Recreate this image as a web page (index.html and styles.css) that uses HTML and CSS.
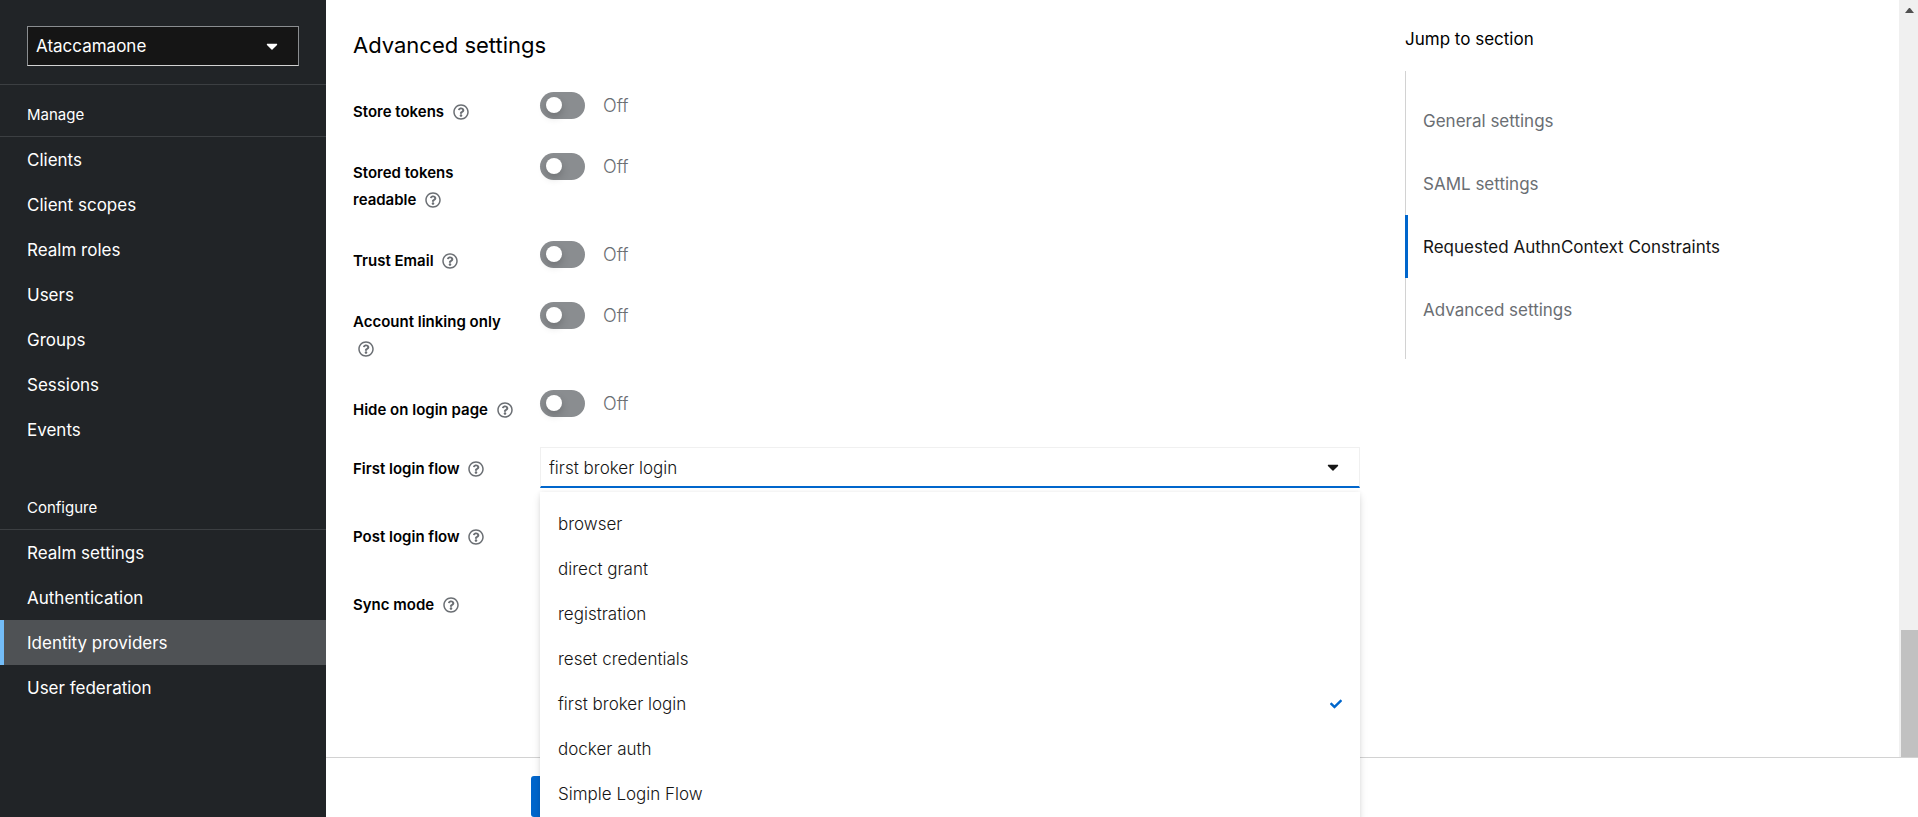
FILE: index.html
```html
<!DOCTYPE html>
<html lang="en">
<head>
<meta charset="utf-8">
<title>Identity providers</title>
<link rel="stylesheet" href="styles.css">
</head>
<body>
<svg class="sprite" aria-hidden="true">
  <symbol id="help" viewBox="0 0 512 512"><path d="M256 8C119.043 8 8 119.083 8 256c0 136.997 111.043 248 248 248s248-111.003 248-248C504 119.083 392.957 8 256 8zm0 448c-110.532 0-200-89.431-200-200 0-110.495 89.472-200 200-200 110.491 0 200 89.471 200 200 0 110.53-89.431 200-200 200zm107.244-255.2c0 67.052-72.421 68.084-72.421 92.863V300c0 6.627-5.373 12-12 12h-45.647c-6.627 0-12-5.373-12-12v-8.659c0-35.745 27.1-50.034 47.579-61.516 17.561-9.845 28.324-16.541 28.324-29.579 0-17.246-21.999-28.693-39.784-28.693-23.189 0-33.894 10.977-48.942 29.969-4.057 5.12-11.46 6.071-16.666 2.124l-27.824-21.098c-5.107-3.872-6.251-11.066-2.644-16.363C184.846 131.491 214.94 112 261.794 112c49.071 0 101.45 38.304 101.45 88.8zM298 368c0 23.159-18.841 42-42 42s-42-18.841-42-42 18.841-42 42-42 42 18.841 42 42z"/></symbol>
  <symbol id="caret" viewBox="0 0 320 512"><path d="M31.3 192h257.3c17.8 0 26.7 21.5 14.1 34.1L174.1 354.8c-7.8 7.8-20.5 7.8-28.3 0L17.2 226.1C4.6 213.5 13.5 192 31.3 192z"/></symbol>
  <symbol id="check" viewBox="0 0 512 512"><path d="M173.898 439.404l-166.4-166.4c-9.997-9.997-9.997-26.206 0-36.204l36.203-36.204c9.997-9.998 26.207-9.998 36.204 0L192 312.69 432.095 72.596c9.997-9.997 26.207-9.997 36.204 0l36.203 36.204c9.997 9.997 9.997 26.206 0 36.204l-294.4 294.401c-9.998 9.997-26.207 9.997-36.204-.001z"/></symbol>
</svg>
<div class="app">
  <nav class="sidebar" aria-label="Global">
    <div class="realm">
      <button class="realm-toggle" type="button">Ataccamaone<svg class="caret"><use href="#caret"/></svg></button>
    </div>
    <section class="nav-group">
      <h2 class="nav-title">Manage</h2>
      <ul class="nav-list">
        <li><a class="nav-link" href="#clients">Clients</a></li>
        <li><a class="nav-link" href="#client-scopes">Client scopes</a></li>
        <li><a class="nav-link" href="#realm-roles">Realm roles</a></li>
        <li><a class="nav-link" href="#users">Users</a></li>
        <li><a class="nav-link" href="#groups">Groups</a></li>
        <li><a class="nav-link" href="#sessions">Sessions</a></li>
        <li><a class="nav-link" href="#events">Events</a></li>
      </ul>
    </section>
    <section class="nav-group">
      <h2 class="nav-title">Configure</h2>
      <ul class="nav-list">
        <li><a class="nav-link" href="#realm-settings">Realm settings</a></li>
        <li><a class="nav-link" href="#authentication">Authentication</a></li>
        <li><a class="nav-link current" href="#identity-providers" aria-current="page">Identity providers</a></li>
        <li><a class="nav-link" href="#user-federation">User federation</a></li>
      </ul>
    </section>
  </nav>
  <main class="main">
    <div class="body">
      <form class="form">
        <h1 class="form-title">Advanced settings</h1>
        <div class="switches">
          <div class="row">
            <div class="label"><label for="store">Store tokens</label> <button class="help" type="button" aria-label="Help for Store tokens"><svg><use href="#help"/></svg></button></div>
            <div class="switch"><input id="store" type="checkbox" role="switch"><span>Off</span></div>
          </div>
          <div class="row">
            <div class="label"><label for="readable">Stored tokens readable</label> <button class="help" type="button" aria-label="Help for Stored tokens readable"><svg><use href="#help"/></svg></button></div>
            <div class="switch"><input id="readable" type="checkbox" role="switch"><span>Off</span></div>
          </div>
          <div class="row">
            <div class="label"><label for="trust">Trust Email</label> <button class="help" type="button" aria-label="Help for Trust Email"><svg><use href="#help"/></svg></button></div>
            <div class="switch"><input id="trust" type="checkbox" role="switch"><span>Off</span></div>
          </div>
          <div class="row">
            <div class="label"><label for="linking">Account linking only</label> <button class="help" type="button" aria-label="Help for Account linking only"><svg><use href="#help"/></svg></button></div>
            <div class="switch"><input id="linking" type="checkbox" role="switch"><span>Off</span></div>
          </div>
          <div class="row">
            <div class="label"><label for="hide">Hide on login page</label> <button class="help" type="button" aria-label="Help for Hide on login page"><svg><use href="#help"/></svg></button></div>
            <div class="switch"><input id="hide" type="checkbox" role="switch"><span>Off</span></div>
          </div>
        </div>
        <div class="selects">
          <div class="row">
            <div class="label"><label for="first">First login flow</label> <button class="help" type="button" aria-label="Help for First login flow"><svg><use href="#help"/></svg></button></div>
            <div class="select expanded">
              <select id="first"><option>first broker login</option></select>
              <svg class="caret"><use href="#caret"/></svg>
              <ul class="menu" role="listbox" aria-label="First login flow">
                <li><button class="option" type="button" role="option">browser</button></li>
                <li><button class="option" type="button" role="option">direct grant</button></li>
                <li><button class="option" type="button" role="option">registration</button></li>
                <li><button class="option" type="button" role="option">reset credentials</button></li>
                <li><button class="option" type="button" role="option" aria-selected="true">first broker login<svg class="check"><use href="#check"/></svg></button></li>
                <li><button class="option" type="button" role="option">docker auth</button></li>
                <li><button class="option" type="button" role="option">Simple Login Flow</button></li>
              </ul>
            </div>
          </div>
          <div class="row">
            <div class="label"><label for="post">Post login flow</label> <button class="help" type="button" aria-label="Help for Post login flow"><svg><use href="#help"/></svg></button></div>
            <div class="select"><select id="post"></select></div>
          </div>
          <div class="row">
            <div class="label"><label for="sync">Sync mode</label> <button class="help" type="button" aria-label="Help for Sync mode"><svg><use href="#help"/></svg></button></div>
            <div class="select"><select id="sync"></select></div>
          </div>
        </div>
      </form>
      <aside class="jump">
        <h2 class="jump-title">Jump to section</h2>
        <ul class="jump-list">
          <li><a class="jump-link" href="#general">General settings</a></li>
          <li><a class="jump-link" href="#saml">SAML settings</a></li>
          <li><a class="jump-link current" href="#authn">Requested AuthnContext Constraints</a></li>
          <li><a class="jump-link" href="#advanced">Advanced settings</a></li>
        </ul>
      </aside>
      <div class="scrollbar" aria-hidden="true">
        <svg class="scroll-up" viewBox="0 0 9 5"><path d="M0 5h9L5 0H4z"/></svg>
        <div class="thumb"></div>
      </div>
    </div>
    <footer class="actions"><button class="save" type="button" aria-label="Save"></button></footer>
  </main>
</div>
</body>
</html>
```
FILE: styles.css
```css
* { box-sizing: border-box; }
body, h1, h2, ul { margin: 0; padding: 0; }
ul { list-style: none; }
h1, h2 { font-weight: 400; }
a { text-decoration: none; }
body { font: 17px/27px Inter, "Liberation Sans", sans-serif; color: #151515; background: #fff; }
button, select { font: inherit; color: inherit; margin: 0; border: 0; border-radius: 0; background: none; }
svg { fill: currentColor; }
.sprite { display: none; }

.app { display: flex; height: 100vh; overflow: hidden; }

.sidebar { flex: none; width: 326px; background: #212427; color: #fff; }
.realm { padding: 26px 27px 18px; border-bottom: 1px solid #3c3f42; }
.realm-toggle { display: flex; align-items: center; justify-content: space-between; width: 100%; height: 40px; padding: 0 20px 0 8px; background: #151515; border: 1px solid #8a8d90; border-bottom-color: #d2d2d2; }
.caret { width: 12px; height: 18px; }
.nav-group { margin-bottom: 26px; }
.nav-title { padding: 16px 27px 8px; font-size: 15px; border-bottom: 1px solid #3c3f42; }
.nav-link { display: block; padding: 10px 27px 8px; color: #fff; }
.nav-link.current { padding-left: 23px; border-left: 4px solid #73bcf7; background: #4f5255; }

.main { flex: 1; min-width: 0; display: flex; flex-direction: column; }
.body { flex: 1; min-height: 0; display: flex; padding-left: 27px; }
.form { flex: 1; min-width: 0; padding-top: 30px; }
.form-title { font-size: 22px; line-height: 30px; color: #000; }
.switches { display: grid; gap: 27px; margin: 32px 0 23px; }
.selects { display: grid; gap: 27px; }
.row { display: grid; grid-template-columns: 163px 1fr; column-gap: 24px; align-items: start; }
.label { padding: 6px 0 1px; font-size: 15px; line-height: 27px; font-weight: 600; color: #000; }
.selects .label { padding-top: 8px; }
.help { width: 16px; height: 16px; margin-left: 5px; padding: 0; color: #6a6e73; vertical-align: -3px; }
.help svg { display: block; width: 16px; height: 16px; }

.switch { display: flex; align-items: center; gap: 18px; height: 27px; font-size: 18px; font-weight: 300; color: #6a6e73; }
.switch input { appearance: none; margin: 0; padding: 5px 6px; width: 45px; height: 27px; border-radius: 14px; background: #8a8d90; }
.switch input::before { content: ""; display: block; width: 16px; height: 16px; border-radius: 50%; background: #fff; box-shadow: 0 4px 8px rgba(3, 3, 3, .2); }

.select { position: relative; font-weight: 300; }
.select select { display: block; appearance: none; width: 100%; height: 41px; padding: 2px 8px 0; border: 1px solid #f0f0f0; border-bottom-color: #8a8d90; background: #fff; }
.select.expanded select { border-bottom: 2px solid #06c; }
.select > .caret { position: absolute; right: 21px; top: 11px; }
.menu { position: absolute; z-index: 2; top: 45px; left: 0; right: 0; padding: 9px 0; background: #fff; box-shadow: 0 4px 8px rgba(3, 3, 3, .12), 0 0 4px rgba(3, 3, 3, .06); }
.option { display: flex; align-items: center; justify-content: space-between; width: 100%; height: 45px; padding: 1px 18px 0; text-align: left; }
.check { width: 12px; height: 12px; color: #06c; }

.jump { flex: none; width: 494px; margin-left: 45px; padding-top: 26px; }
.jump-title { font-size: 17px; color: #000; }
.jump-list { margin-top: 18px; padding: 18px 0; border-left: 1px solid #d2d2d2; }
.jump-link { display: block; margin-left: -1px; padding: 19px 18px 17px; color: #6a6e73; }
.jump-link.current { padding-left: 15px; border-left: 3px solid #06c; color: #151515; }

.scrollbar { flex: none; display: flex; flex-direction: column; justify-content: space-between; align-items: center; width: 19px; padding: 8px 0 0 2px; background: #f0f0f0; }
.scroll-up { width: 9px; height: 5px; color: #505050; }
.thumb { width: 100%; height: 17%; background: #c1c1c1; }

.actions { padding: 18px 205px 0; height: 60px; border-top: 1px solid #d2d2d2; }
.save { width: 76px; height: 41px; background: #06c; border-radius: 3px; }
```
